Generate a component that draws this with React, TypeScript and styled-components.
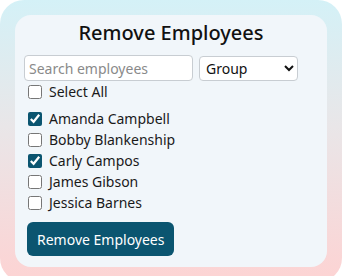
import React, { useState } from "react";
import styled, { createGlobalStyle } from "styled-components";

const GlobalStyle = createGlobalStyle`
  body {
    margin: 0;
    font-family: "Noto Sans", "Open Sans", sans-serif;
    background: #ffffff;
  }
`;

const Backdrop = styled.div`
  padding: 15px;
  border-radius: 24px;
  background: linear-gradient(180deg, #d4f1f7 0%, #e9e6e8 45%, #fdd3d3 100%);
`;

const Card = styled.div`
  background: #f1f6fa;
  border-radius: 16px;
  padding: 4px 9px 11px;
`;

const Title = styled.h2`
  margin: 0 0 9px;
  text-align: center;
  font-size: 20px;
  font-weight: 500;
  line-height: 27px;
  color: #111111;
`;

const Filters = styled.div`
  display: flex;
  gap: 6px;
  align-items: center;
`;

const SearchInput = styled.input`
  width: 169px;
  height: 26px;
  box-sizing: border-box;
  padding: 0 4px;
  border: 1px solid #c8cdd2;
  border-radius: 4px;
  background: #ffffff;
  font-family: inherit;
  font-size: 14px;
  color: #222;

  &::placeholder {
    color: #8a8a8a;
  }
`;

const GroupSelect = styled.select`
  width: 99px;
  height: 25px;
  box-sizing: border-box;
  border: 1px solid #c8cdd2;
  border-radius: 4px;
  background: #ffffff;
  font-family: inherit;
  font-size: 14px;
  color: #111;
  padding: 0 2px;
`;

const Row = styled.label<{ $spaced?: boolean }>`
  display: flex;
  align-items: center;
  height: 21px;
  font-size: 14px;
  color: #1a1a1a;
  margin-bottom: ${(p) => (p.$spaced ? "6px" : "0")};
`;

const Check = styled.input`
  width: 14px;
  height: 14px;
  margin: 0 7px 0 4px;
  accent-color: #0b5570;
`;

const List = styled.div`
  display: flex;
  flex-direction: column;
`;

const RemoveButton = styled.button`
  margin: 9px 0 0 3px;
  height: 34px;
  padding: 0 10px;
  border: none;
  border-radius: 6px;
  background: #0b5570;
  color: #ffffff;
  font-family: inherit;
  font-size: 14px;
  cursor: pointer;
`;

const employees = [
  { name: "Amanda Campbell", checked: true },
  { name: "Bobby Blankenship", checked: false },
  { name: "Carly Campos", checked: true },
  { name: "James Gibson", checked: false },
  { name: "Jessica Barnes", checked: false },
];

export default function App() {
  const [selected, setSelected] = useState(employees.map((e) => e.checked));
  const allChecked = selected.every(Boolean);

  const toggle = (i: number) =>
    setSelected((prev) => prev.map((v, j) => (j === i ? !v : v)));

  return (
    <>
      <GlobalStyle />
      <Backdrop>
        <Card>
          <Title>Remove Employees</Title>
          <Filters>
            <SearchInput placeholder="Search employees" />
            <GroupSelect defaultValue="">
              <option value="">Group</option>
              <option value="a">Sales</option>
              <option value="b">Support</option>
            </GroupSelect>
          </Filters>
          <List>
            <Row $spaced>
              <Check
                type="checkbox"
                checked={allChecked}
                onChange={() => setSelected(selected.map(() => !allChecked))}
              />
              Select All
            </Row>
            {employees.map((e, i) => (
              <Row key={e.name}>
                <Check type="checkbox" checked={selected[i]} onChange={() => toggle(i)} />
                {e.name}
              </Row>
            ))}
          </List>
          <RemoveButton>Remove Employees</RemoveButton>
        </Card>
      </Backdrop>
    </>
  );
}
